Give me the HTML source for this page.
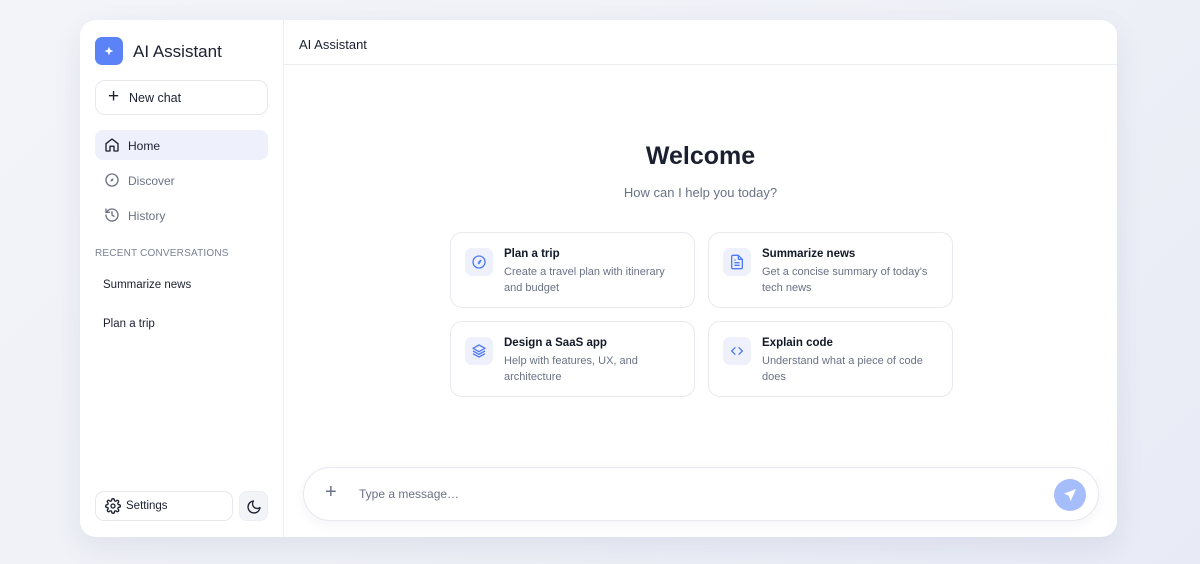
<!DOCTYPE html>
<html><head><meta charset="utf-8"><style>
*{box-sizing:border-box;margin:0;padding:0}
body{width:1200px;height:564px;overflow:hidden;background:linear-gradient(135deg,#f3f4f9 0%,#eef0f7 60%,#e8ebf6 100%);font-family:"Liberation Sans",sans-serif;position:relative}
.app{position:absolute;left:80px;top:20px;width:1037px;height:517px;background:#fff;border-radius:16px;box-shadow:0 10px 30px rgba(30,40,90,.08);overflow:hidden}
.side{position:absolute;left:0;top:0;width:204px;height:100%;border-right:1px solid #eceef3}
.logo{position:absolute;left:15px;top:17px;width:28px;height:28px;border-radius:7px;background:#5b82f7}
.brand{position:absolute;left:53px;top:22px;font-size:17px;color:#1b2030}
.newchat{position:absolute;left:15px;top:60px;width:173px;height:35px;border:1px solid #e6e8ee;border-radius:10px;font-size:12.5px;color:#1b2030;padding:10px 0 0 33px}
.newchat .pl{position:absolute;left:12px;top:5px;font-size:19px;font-weight:300}
.nav{position:absolute;left:15px;width:173px;height:30px;border-radius:8px;font-size:12px;padding:9px 0 0 33px;color:#6a7285}
.nav svg{position:absolute;left:9px;top:7px}
.nav.act{background:#eef0fb;color:#1b2030}
.rc{position:absolute;left:15px;top:228px;font-size:10px;color:#7a8194;letter-spacing:.2px}
.conv{position:absolute;left:23px;font-size:11.5px;color:#1b2030}
.set{position:absolute;left:15px;top:471px;width:138px;height:30px;border:1px solid #e6e8ee;border-radius:9px;font-size:11.5px;color:#1b2030;padding:8px 0 0 30px}
.set svg{position:absolute;left:9px;top:6px}
.moon{position:absolute;left:159px;top:471px;width:29px;height:30px;border-radius:8px;background:#f3f4f8;border:1px solid #eceef3}
.moon svg{position:absolute;left:6px;top:7px}
.hdr{position:absolute;left:204px;top:0;right:0;height:45px;border-bottom:1px solid #eceef3;font-size:13px;color:#1b2030;padding:17px 0 0 15px}
.wel{position:absolute;left:204px;right:0;top:122px;text-align:center;font-size:25px;color:#1b2030;font-weight:bold}
.sub{position:absolute;left:204px;right:0;top:165px;text-align:center;font-size:13px;color:#6a7285}
.card{position:absolute;width:245px;height:76px;border:1px solid #e8eaef;border-radius:12px}
.card .ic{position:absolute;left:14px;top:15px;width:28px;height:28px;border-radius:7px;background:#eef0fb}
.card .ic svg{position:absolute;left:6px;top:6px}
.card b{position:absolute;left:53px;top:15px;font-size:11.5px;color:#111827}
.card p{position:absolute;left:53px;top:32px;width:180px;font-size:11px;line-height:15.5px;color:#6a7285}
.inp{position:absolute;left:223px;top:447px;width:796px;height:54px;border:1px solid #e6e8ee;border-radius:27px;box-shadow:0 4px 12px rgba(30,40,90,.05);background:#fff}
.inp .pl{position:absolute;left:21px;top:13px;font-size:20px;color:#6a7285;font-weight:300}
.inp .ph{position:absolute;left:55px;top:19px;font-size:12px;color:#6a7285}
.send{position:absolute;right:12px;top:11px;width:32px;height:32px;border-radius:50%;background:#a6bdfb}
.send svg{position:absolute;left:8px;top:8px}
</style></head><body>
<div class="app">
<div class="side">
<div class="logo"><svg width="28" height="28" viewBox="0 0 28 28"><path d="M14 9.5l1.2 3.3 3.3 1.2-3.3 1.2-1.2 3.3-1.2-3.3-3.3-1.2 3.3-1.2z" fill="#fff"/></svg></div>
<div class="brand">AI Assistant</div>
<div class="newchat"><span class="pl">+</span>New chat</div>
<div class="nav act" style="top:110px"><svg width="16" height="16" viewBox="0 0 24 24" fill="none" stroke="#1b2030" stroke-width="2" stroke-linejoin="round"><path d="M3 10l9-7 9 7v10a1 1 0 0 1-1 1h-5v-7H9v7H4a1 1 0 0 1-1-1z"/></svg>Home</div>
<div class="nav" style="top:145px"><svg width="16" height="16" viewBox="0 0 24 24" fill="none" stroke="#6a7285" stroke-width="2"><circle cx="12" cy="12" r="9"/><path d="M14.5 9.5l-1.5 4-3.5 1 1.5-4z" fill="#6a7285" stroke="none"/></svg>Discover</div>
<div class="nav" style="top:180px"><svg width="16" height="16" viewBox="0 0 24 24" fill="none" stroke="#6a7285" stroke-width="2" stroke-linecap="round"><path d="M3 12a9 9 0 1 0 3-6.7L3 8"/><path d="M3 3v5h5"/><path d="M12 7v5l3 2"/></svg>History</div>
<div class="rc">RECENT CONVERSATIONS</div>
<div class="conv" style="top:259px">Summarize news</div>
<div class="conv" style="top:298px">Plan a trip</div>
<div class="set"><svg width="16" height="16" viewBox="0 0 24 24" fill="none" stroke="#1b2030" stroke-width="2"><circle cx="12" cy="12" r="3"/><path d="M19.4 15a1.7 1.7 0 0 0 .3 1.8l.1.1a2 2 0 1 1-2.8 2.8l-.1-.1a1.7 1.7 0 0 0-1.8-.3 1.7 1.7 0 0 0-1 1.5V21a2 2 0 1 1-4 0v-.1a1.7 1.7 0 0 0-1.1-1.5 1.7 1.7 0 0 0-1.8.3l-.1.1a2 2 0 1 1-2.8-2.8l.1-.1a1.7 1.7 0 0 0 .3-1.8 1.7 1.7 0 0 0-1.5-1H3a2 2 0 1 1 0-4h.1a1.7 1.7 0 0 0 1.5-1.1 1.7 1.7 0 0 0-.3-1.8l-.1-.1a2 2 0 1 1 2.8-2.8l.1.1a1.7 1.7 0 0 0 1.8.3H9a1.7 1.7 0 0 0 1-1.5V3a2 2 0 1 1 4 0v.1a1.7 1.7 0 0 0 1 1.5 1.7 1.7 0 0 0 1.8-.3l.1-.1a2 2 0 1 1 2.8 2.8l-.1.1a1.7 1.7 0 0 0-.3 1.8V9a1.7 1.7 0 0 0 1.5 1H21a2 2 0 1 1 0 4h-.1a1.7 1.7 0 0 0-1.5 1z"/></svg>Settings</div>
<div class="moon"><svg width="16" height="16" viewBox="0 0 24 24" fill="none" stroke="#1b2030" stroke-width="2" stroke-linejoin="round"><path d="M21 12.8A9 9 0 1 1 11.2 3a7 7 0 0 0 9.8 9.8z"/></svg></div>
</div>
<div class="hdr">AI Assistant</div>
<div class="wel">Welcome</div>
<div class="sub">How can I help you today?</div>
<div class="card" style="left:370px;top:212px"><div class="ic"><svg width="16" height="16" viewBox="0 0 24 24" fill="none" stroke="#4f7cf6" stroke-width="2"><circle cx="12" cy="12" r="9"/><path d="M15 9l-2 4-2 2 1-3z" fill="#4f7cf6"/></svg></div><b>Plan a trip</b><p>Create a travel plan with itinerary and budget</p></div>
<div class="card" style="left:628px;top:212px"><div class="ic"><svg width="16" height="16" viewBox="0 0 24 24" fill="none" stroke="#4f7cf6" stroke-width="2" stroke-linejoin="round"><path d="M14 2H6a2 2 0 0 0-2 2v16a2 2 0 0 0 2 2h12a2 2 0 0 0 2-2V8z"/><path d="M14 2v6h6M8 13h8M8 17h8M8 9h2"/></svg></div><b>Summarize news</b><p>Get a concise summary of today's tech news</p></div>
<div class="card" style="left:370px;top:301px"><div class="ic"><svg width="16" height="16" viewBox="0 0 24 24" fill="none" stroke="#4f7cf6" stroke-width="2" stroke-linejoin="round"><path d="M12 3l9 5-9 5-9-5z"/><path d="M3 12l9 5 9-5M3 16l9 5 9-5"/></svg></div><b>Design a SaaS app</b><p>Help with features, UX, and architecture</p></div>
<div class="card" style="left:628px;top:301px"><div class="ic"><svg width="16" height="16" viewBox="0 0 24 24" fill="none" stroke="#4f7cf6" stroke-width="2" stroke-linecap="round" stroke-linejoin="round"><path d="M9 7l-5 5 5 5M15 7l5 5-5 5"/></svg></div><b>Explain code</b><p>Understand what a piece of code does</p></div>
<div class="inp"><span class="pl">+</span><span class="ph">Type a message…</span><div class="send"><svg width="16" height="16" viewBox="0 0 24 24"><path d="M21 3L3 10l7 3 3 8z" fill="#fff"/></svg></div></div>
</div>
</body></html>
